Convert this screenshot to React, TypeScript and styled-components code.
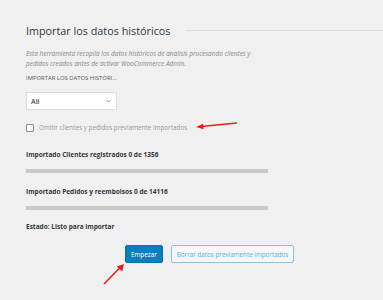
import React, { useState } from 'react';
import styled, { createGlobalStyle } from 'styled-components';

const GlobalStyle = createGlobalStyle`
    html, body {
        margin: 0;
        padding: 0;
        background: #f0f0f0;
    }
    body {
        font-family: "Open Sans", "Noto Sans", sans-serif;
        color: #32373c;
    }
`;

const Page = styled.div`
    position: relative;
    width: 383px;
    height: 300px;
    overflow: hidden;
    padding: 22px 0 0 26px;
    box-sizing: border-box;
`;

const TitleRow = styled.div`
    display: flex;
    align-items: center;
    gap: 16px;
    height: 16px;
`;

const Title = styled.h2`
    margin: 0;
    font-size: 10.8px;
    font-weight: 400;
    color: #32373c;
    white-space: nowrap;
`;

const TitleRule = styled.div`
    flex: 1;
    height: 1px;
    background: #dcdcdc;
`;

const Description = styled.p`
    margin: 11px 0 0;
    width: 232px;
    font-size: 6.45px;
    line-height: 10px;
    font-style: italic;
    color: #868686;
`;

const FieldLabel = styled.div`
    margin-top: 5px;
    font-size: 5.9px;
    line-height: 8px;
    text-transform: uppercase;
    color: #555;
`;

const Select = styled.div`
    margin-top: 10px;
    width: 91px;
    height: 18px;
    box-sizing: border-box;
    border: 1px solid #dcdcdc;
    background: #fff;
    display: flex;
    align-items: center;
    justify-content: space-between;
    padding: 0 5px 0 4px;
    font-size: 7px;
    font-weight: 600;
    color: #444;
`;

const CheckRow = styled.label`
    margin-top: 13px;
    display: flex;
    align-items: center;
    gap: 5px;
    font-size: 6.35px;
    color: #999;
`;

const Box = styled.span`
    width: 8px;
    height: 8px;
    border: 1px solid #8c8f94;
    border-radius: 1px;
    background: #fbfbfb;
    box-sizing: border-box;
`;

const ProgressLabel = styled.div<{ $top: number }>`
    margin-top: ${(p) => p.$top}px;
    font-size: 6.5px;
    line-height: 10px;
    font-weight: 700;
    color: #32373c;
`;

const Track = styled.div`
    margin-top: 9px;
    width: 242px;
    height: 4px;
    background: #c8c8c8;
`;

const Actions = styled.div`
    margin: 13px 0 0 99px;
    display: flex;
    gap: 8px;
`;

const Button = styled.button<{ $primary?: boolean }>`
    height: 18px;
    border-radius: 2px;
    font-family: inherit;
    font-size: 6.3px;
    cursor: pointer;
    border: 1px solid ${(p) => (p.$primary ? '#0073aa' : '#8dbfe2')};
    background: ${(p) => (p.$primary ? '#0a7fc0' : '#f6f7f7')};
    color: ${(p) => (p.$primary ? '#fff' : '#6aa8d8')};
    padding: 0 5px;
`;

const Arrow = styled.svg<{ $left: number; $top: number }>`
    position: absolute;
    left: ${(p) => p.$left}px;
    top: ${(p) => p.$top}px;
    overflow: visible;
`;

const Chevron = () => (
    <svg width="5" height="4" viewBox="0 0 10 6">
        <path d="M1 1l4 4 4-4" fill="none" stroke="#777" strokeWidth="1.6" />
    </svg>
);

const App: React.FC = () => {
    const [skip, setSkip] = useState(false);
    const progress = [
        { label: 'Importado Clientes registrados', done: 0, total: 1356 },
        { label: 'Importado Pedidos y reembolsos', done: 0, total: 14116 },
    ];

    return (
        <>
            <GlobalStyle />
            <Page>
                <TitleRow>
                    <Title>Importar los datos históricos</Title>
                    <TitleRule />
                </TitleRow>
                <Description>
                    Esta herramienta recopila los datos históricos de análisis procesando clientes y
                    pedidos creados antes de activar WooCommerce Admin.
                </Description>
                <FieldLabel>Importar los datos históri...</FieldLabel>
                <Select>
                    <span>All</span>
                    <Chevron />
                </Select>
                <CheckRow onClick={() => setSkip(!skip)}>
                    <Box />
                    Omitir clientes y pedidos previamente importados
                </CheckRow>
                {progress.map((item, i) => (
                    <React.Fragment key={item.label}>
                        <ProgressLabel $top={i === 0 ? 18 : 14}>
                            {item.label} {item.done} de {item.total}
                        </ProgressLabel>
                        <Track />
                    </React.Fragment>
                ))}
                <ProgressLabel $top={12}>Estado: Listo para importar</ProgressLabel>
                <Actions>
                    <Button $primary>Empezar</Button>
                    <Button>Borrar datos previamente importados</Button>
                </Actions>

                <Arrow $left={196} $top={122} width="42" height="8">
                    <line x1="41" y1="1" x2="5" y2="4.5" stroke="#ee1c1c" strokeWidth="1.6" />
                    <path d="M0 5 L7 1.8 L7.6 7.2 Z" fill="#ee1c1c" />
                </Arrow>
                <Arrow $left={103} $top={263} width="22" height="22">
                    <line x1="1" y1="21" x2="17" y2="4.5" stroke="#ee1c1c" strokeWidth="1.6" />
                    <path d="M21 1 L19.2 8.4 L13.8 3.4 Z" fill="#ee1c1c" />
                </Arrow>
            </Page>
        </>
    );
};

export default App;
